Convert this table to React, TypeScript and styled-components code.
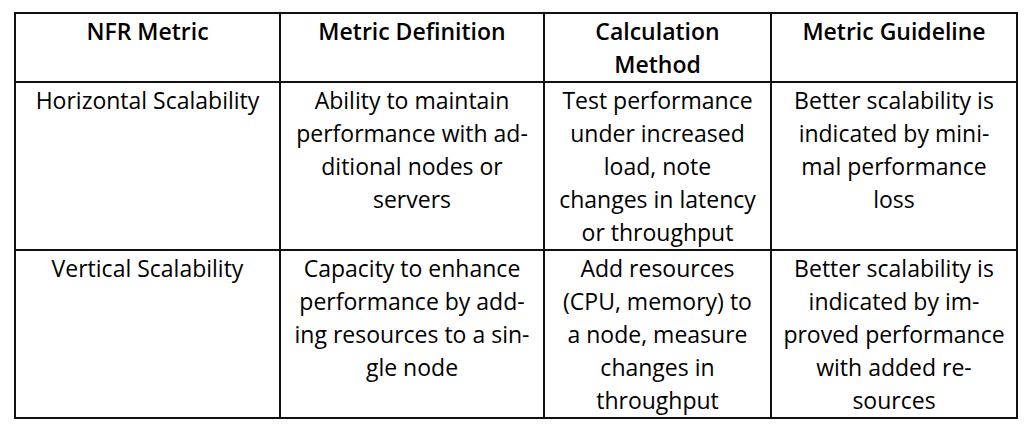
import React from 'react';
import styled, { createGlobalStyle } from 'styled-components';

const Global = createGlobalStyle`
  html, body { margin: 0; padding: 0; background: #ffffff; }
  body { font-family: "Open Sans", "Noto Sans", sans-serif; color: #000000; }
`;

const Page = styled.div`
  padding: 12px 0 0 14px;
`;

const Table = styled.table`
  border-collapse: collapse;
  table-layout: fixed;
  width: 1002px;
`;

const Col = styled.col<{ $w: number }>`
  width: ${(p) => p.$w}px;
`;

const HeadCell = styled.th`
  border: 2px solid #111111;
  padding: 1px 4px 0;
  vertical-align: top;
  text-align: center;
  font-size: 23px;
  line-height: 33px;
  font-weight: 600;
  white-space: nowrap;
`;

const Cell = styled.td`
  border: 2px solid #111111;
  padding: 1px 4px 0;
  vertical-align: top;
  text-align: center;
  font-size: 23px;
  line-height: 33px;
  font-weight: 400;
  white-space: nowrap;
`;

const Line = styled.span`
  display: block;
`;

const widths = [265, 264, 227, 246];

const header: string[][] = [
  ['NFR Metric'],
  ['Metric Definition'],
  ['Calculation', 'Method'],
  ['Metric Guideline'],
];

const rows: string[][][] = [
  [
    ['Horizontal Scalability'],
    ['Ability to maintain', 'performance with ad-', 'ditional nodes or', 'servers'],
    ['Test performance', 'under increased', 'load, note', 'changes in latency', 'or throughput'],
    ['Better scalability is', 'indicated by mini-', 'mal performance', 'loss'],
  ],
  [
    ['Vertical Scalability'],
    ['Capacity to enhance', 'performance by add-', 'ing resources to a sin-', 'gle node'],
    ['Add resources', '(CPU, memory) to', 'a node, measure', 'changes in', 'throughput'],
    ['Better scalability is', 'indicated by im-', 'proved performance', 'with added re-', 'sources'],
  ],
];

export default function App() {
  return (
    <>
      <Global />
      <Page>
        <Table>
          <colgroup>
            {widths.map((w, i) => (
              <Col key={i} $w={w} />
            ))}
          </colgroup>
          <thead>
            <tr>
              {header.map((lines, i) => (
                <HeadCell key={i}>
                  {lines.map((l, j) => (
                    <Line key={j}>{l}</Line>
                  ))}
                </HeadCell>
              ))}
            </tr>
          </thead>
          <tbody>
            {rows.map((row, r) => (
              <tr key={r}>
                {row.map((lines, c) => (
                  <Cell key={c}>
                    {lines.map((l, j) => (
                      <Line key={j}>{l}</Line>
                    ))}
                  </Cell>
                ))}
              </tr>
            ))}
          </tbody>
        </Table>
      </Page>
    </>
  );
}
